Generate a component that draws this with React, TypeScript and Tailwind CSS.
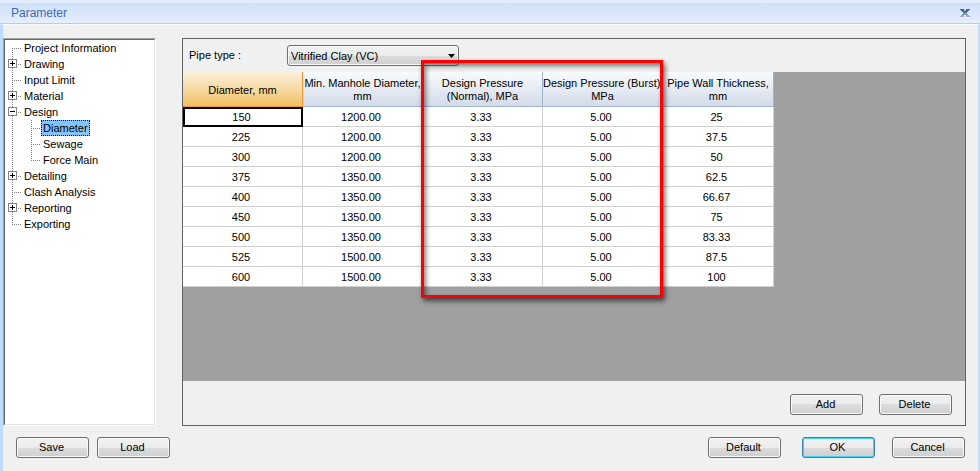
import React from 'react';

type Node = { label: string; state?: 'open' | 'closed'; last?: boolean; children?: string[] };

const tree: Node[] = [
  { label: 'Project Information' },
  { label: 'Drawing', state: 'closed' },
  { label: 'Input Limit' },
  { label: 'Material', state: 'closed' },
  { label: 'Design', state: 'open', children: ['Diameter', 'Sewage', 'Force Main'] },
  { label: 'Detailing', state: 'closed' },
  { label: 'Clash Analysis' },
  { label: 'Reporting', state: 'closed' },
  { label: 'Exporting', last: true },
];

const columns = [
  'Diameter, mm',
  'Min. Manhole Diameter,\nmm',
  'Design Pressure\n(Normal), MPa',
  'Design Pressure (Burst),\nMPa',
  'Pipe Wall Thickness,\nmm',
];

const rows = [
  ['150', '1200.00', '3.33', '5.00', '25'],
  ['225', '1200.00', '3.33', '5.00', '37.5'],
  ['300', '1200.00', '3.33', '5.00', '50'],
  ['375', '1350.00', '3.33', '5.00', '62.5'],
  ['400', '1350.00', '3.33', '5.00', '66.67'],
  ['450', '1350.00', '3.33', '5.00', '75'],
  ['500', '1350.00', '3.33', '5.00', '83.33'],
  ['525', '1500.00', '3.33', '5.00', '87.5'],
  ['600', '1500.00', '3.33', '5.00', '100'],
];

function Branch({ state, first, last }: { state?: 'open' | 'closed'; first?: boolean; last?: boolean }) {
  return (
    <svg width="17" height="16" viewBox="0 0 17 16" fill="none" aria-hidden="true" className="shrink-0">
      <path d={`M7.5 ${first ? 8 : 0}V${last ? 8 : 16}M7 8.5H17`} stroke="#808080" strokeDasharray="1 1" />
      {state && (
        <>
          <rect x="3.5" y="3.5" width="8" height="8" fill="#fff" stroke="#848484" />
          <path d={state === 'closed' ? 'M5 7.5H10M7.5 5V10' : 'M5 7.5H10'} stroke="#000" />
        </>
      )}
    </svg>
  );
}

function ChildBranch({ last }: { last: boolean }) {
  return (
    <svg width="36" height="16" viewBox="0 0 36 16" fill="none" aria-hidden="true" className="shrink-0">
      <path d={`M7.5 0V16M26.5 0V${last ? 8 : 16}M26 8.5H36`} stroke="#808080" strokeDasharray="1 1" />
    </svg>
  );
}

function TreeLabel({ text, selected }: { text: string; selected?: boolean }) {
  return (
    <button
      type="button"
      className={
        selected
          ? 'h-4 border border-dotted border-black bg-[#80c4fb] px-px leading-[14px]'
          : 'h-4 border border-transparent px-px leading-[14px]'
      }
    >
      {text}
    </button>
  );
}

function PushButton({ children, focused }: { children: string; focused?: boolean }) {
  return (
    <button
      type="button"
      className={
        focused
          ? 'h-[21px] w-[73px] rounded-[3px] border border-[#3c7fb1] bg-[linear-gradient(#f2f2f2,#ebebeb_50%,#dddddd_50%,#cfcfcf)] pr-[2px] leading-[19px] shadow-[inset_0_0_0_1px_#45d0f5]'
          : 'h-[21px] w-[73px] rounded-[3px] border border-[#707070] bg-[linear-gradient(#f2f2f2,#ebebeb_50%,#dddddd_50%,#cfcfcf)] pr-[2px] leading-[19px] shadow-[inset_0_0_0_1px_#f8f8f8]'
      }
    >
      {children}
    </button>
  );
}

export default function App() {
  return (
    <div className="flex min-h-screen flex-col bg-[#f0f0f0] font-['Liberation_Sans',Arial,sans-serif] text-[11px] text-black">
      <header className="flex h-6 items-center justify-between border-t-[3px] border-b border-t-[#e3ecfd] border-b-[#bccbe6] bg-linear-to-b from-[#cfe0f7] to-[#e4effd] pr-[10px] pl-[11px]">
        <h1 className="text-[12px] leading-5 text-[#3f6ab5]">Parameter</h1>
        <button type="button" aria-label="Close">
          <svg width="10" height="10" viewBox="0 0 10 10" fill="none" aria-hidden="true">
            <path d="M0 9.500H4M6 9.500H10" stroke="#fff" />
            <path d="M0 1.500H4M6 1.500H10M1 2.500H4.500M5.500 2.500H9" stroke="#4d666f" />
            <path d="M2 3.500H8M3 4.500H7" stroke="#437a83" />
            <path d="M3 5.500H7M2 6.500H8" stroke="#8593cf" />
            <path d="M1 7.500H4M6 7.500H9M0 8.500H4M6 8.500H10" stroke="#a99bd6" />
          </svg>
        </button>
      </header>

      <div className="flex flex-1 flex-col border-t border-r-2 border-l-[3px] border-t-[#f7faff] border-r-[#bfdbff] border-l-[#bfdbff]">
        <main className="flex flex-1 gap-[26px] pt-[13px] pr-3">
          <nav
            aria-label="Parameter sections"
            className="flex w-[153px] shrink-0 border border-t-[#a0a0a0] border-r-white border-b-white border-l-[#a0a0a0]"
          >
            <div className="flex-1 border border-t-[#696969] border-r-[#e3e3e3] border-b-[#e3e3e3] border-l-[#696969] bg-white">
              <ul>
                {tree.map((node, i) => (
                  <li key={node.label}>
                    <div className="flex h-4">
                      <Branch state={node.state} first={i === 0} last={node.last} />
                      <TreeLabel text={node.label} />
                    </div>
                    {node.children && (
                      <ul>
                        {node.children.map((child, c) => (
                          <li key={child} className="flex h-4">
                            <ChildBranch last={c === 2} />
                            <TreeLabel text={child} selected={c === 0} />
                          </li>
                        ))}
                      </ul>
                    )}
                  </li>
                ))}
              </ul>
            </div>
          </nav>

          <section className="flex min-w-0 flex-1 flex-col border border-[#646464]">
            <div className="flex h-[33px] items-center pl-[6px]">
              <label htmlFor="pipe-type" className="w-[98px]">
                Pipe type :
              </label>
              <div className="relative">
                <select
                  id="pipe-type"
                  className="block h-[21px] w-[172px] appearance-none rounded-[3px] border border-[#707070] bg-[linear-gradient(#f2f2f2,#ebebeb_50%,#dddddd_50%,#cfcfcf)] pt-px pl-[3px] leading-[18px] shadow-[inset_0_0_0_1px_#f8f8f8]"
                >
                  <option>Vitrified Clay (VC)</option>
                </select>
                <svg
                  width="7"
                  height="4"
                  viewBox="0 0 7 4"
                  aria-hidden="true"
                  className="pointer-events-none absolute top-[9px] right-1"
                >
                  <path d="M0 0H7L3.500 4Z" fill="#000" />
                </svg>
              </div>
            </div>

            <div className="flex-1 bg-[#a0a0a0]">
              <div className="relative w-[591px]">
                <table className="w-full table-fixed border-separate border-spacing-0 text-center">
                  <colgroup>
                    <col className="w-[120px]" />
                    <col className="w-[120px]" />
                    <col className="w-[120px]" />
                    <col className="w-[120px]" />
                    <col className="w-[111px]" />
                  </colgroup>
                  <thead>
                    <tr className="h-[35px]">
                      {columns.map((name, i) => (
                        <th
                          key={name}
                          scope="col"
                          className={
                            i === 0
                              ? 'border-r border-b border-[#f29536] bg-linear-to-b from-[#fbf0dc] to-[#f1c15f] p-0 pt-[2px] leading-[13px] font-normal whitespace-pre'
                              : 'border-r border-b border-[#9eb6d2] bg-linear-to-b from-[#f9fbfd] to-[#d3dbe9] p-0 pt-[2px] leading-[13px] font-normal whitespace-pre'
                          }
                        >
                          {name}
                        </th>
                      ))}
                    </tr>
                  </thead>
                  <tbody>
                    {rows.map((row, r) => (
                      <tr key={row[0]} className="h-5">
                        {row.map((value, c) => (
                          <td
                            key={c}
                            className={
                              r === 0 && c === 0
                                ? 'border-2 border-black bg-white p-0 pr-[3px] leading-4'
                                : 'border-r border-b border-[#d0d0d0] bg-white p-0 pt-px pr-[3px] leading-[18px]'
                            }
                          >
                            {value}
                          </td>
                        ))}
                      </tr>
                    ))}
                  </tbody>
                </table>
                <div className="pointer-events-none absolute -top-3 left-[238px] h-[238px] w-[242px] border-[3px] border-[#ff0000] shadow-[2px_3px_5px_rgba(0,0,0,0.6),inset_2px_3px_5px_rgba(0,0,0,0.5)]" />
              </div>
            </div>

            <div className="flex h-11 items-start justify-end gap-4 pt-[13px] pr-[13px]">
              <PushButton>Add</PushButton>
              <PushButton>Delete</PushButton>
            </div>
          </section>
        </main>

        <footer className="flex h-[45px] items-start justify-between px-[13px] pt-[11px]">
          <div className="flex gap-2">
            <PushButton>Save</PushButton>
            <PushButton>Load</PushButton>
          </div>
          <div className="flex gap-[21px]">
            <PushButton>Default</PushButton>
            <div className="flex gap-[17px]">
              <PushButton focused>OK</PushButton>
              <PushButton>Cancel</PushButton>
            </div>
          </div>
        </footer>
      </div>
    </div>
  );
}
